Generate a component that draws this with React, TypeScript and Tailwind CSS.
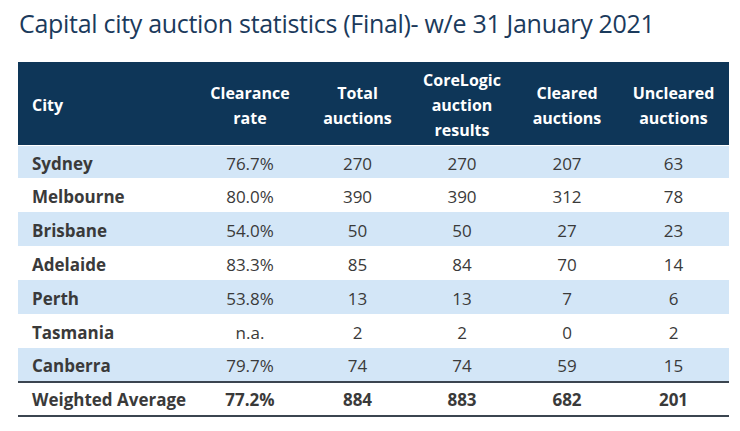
import React from "react";

const rows = [
  ["Sydney", "76.7%", "270", "270", "207", "63"],
  ["Melbourne", "80.0%", "390", "390", "312", "78"],
  ["Brisbane", "54.0%", "50", "50", "27", "23"],
  ["Adelaide", "83.3%", "85", "84", "70", "14"],
  ["Perth", "53.8%", "13", "13", "7", "6"],
  ["Tasmania", "n.a.", "2", "2", "0", "2"],
  ["Canberra", "79.7%", "74", "74", "59", "15"],
];

export default function App() {
  return (
    <div
      className="w-[740px] h-[431px] bg-white overflow-hidden"
      style={{ fontFamily: '"Open Sans", sans-serif' }}
    >
      <div className="pl-[19px] pt-[5px] h-[62px] text-[25px] leading-[37px] text-[#1b3a5c] tracking-[-0.3px]">
        Capital city auction statistics (Final)- w/e 31 January 2021
      </div>
      <table className="ml-[18px] w-[711px] table-fixed border-collapse">
        <colgroup>
          <col className="w-[177px]" />
          <col className="w-[110px]" />
          <col className="w-[105px]" />
          <col className="w-[104px]" />
          <col className="w-[106px]" />
          <col className="w-[109px]" />
        </colgroup>
        <thead>
          <tr className="h-[83px] bg-[#0e3658] text-white font-bold text-[16px] leading-[25px] border-b border-white">
            <th className="text-left pl-[14px] pt-[5px] font-bold">City</th>
            <th className="text-center pt-[5px] font-bold">Clearance<br />rate</th>
            <th className="text-center pt-[5px] font-bold">Total<br />auctions</th>
            <th className="text-center pt-[5px] font-bold">CoreLogic<br />auction<br />results</th>
            <th className="text-center pt-[5px] font-bold">Cleared<br />auctions</th>
            <th className="text-center pt-[5px] font-bold pr-[2px]">Uncleared<br />auctions</th>
          </tr>
        </thead>
        <tbody className="text-[17px] text-[#3a3a3a]">
          {rows.map((r, i) => (
            <tr
              key={r[0]}
              className={
                (i === 0 ? "h-[33px] " : "h-[34px] ") +
                (i % 2 === 0 ? "bg-[#d3e6f7]" : "bg-white")
              }
            >
              <td className="pl-[14px] pt-[3px] font-bold">{r[0]}</td>
              {r.slice(1).map((v, j) => (
                <td key={j} className={"text-center pt-[3px]" + (j === 4 ? " pr-[2px]" : "")}>
                  {v}
                </td>
              ))}
            </tr>
          ))}
          <tr className="h-[34px] border-t-2 border-b-2 border-[#3b4550] font-bold">
            <td className="pl-[14px] pt-[1px]">Weighted Average</td>
            <td className="text-center pt-[1px]">77.2%</td>
            <td className="text-center pt-[1px]">884</td>
            <td className="text-center pt-[1px]">883</td>
            <td className="text-center pt-[1px]">682</td>
            <td className="text-center pt-[1px] pr-[2px]">201</td>
          </tr>
        </tbody>
      </table>
    </div>
  );
}
